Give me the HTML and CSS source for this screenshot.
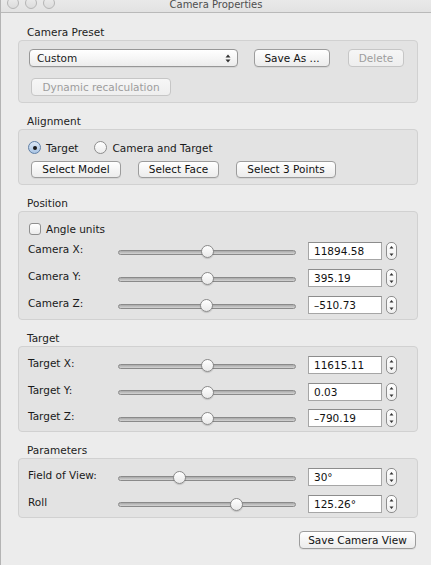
FILE: index.html
```html
<!DOCTYPE html>
<html>
<head>
<meta charset="utf-8">
<link rel="stylesheet" href="styles.css">
</head>
<body>
<div class="window">
  <div class="titlebar">
    <div class="lights"><span class="light"></span><span class="light"></span><span class="light"></span></div>
    <div class="title">Camera Properties</div>
    <div></div>
  </div>
  <div class="content">
    <section class="group">
      <div class="group-label">Camera Preset</div>
      <div class="box box-preset">
        <div class="preset-row">
          <div class="combo"><span>Custom</span>
            <svg class="combo-arrows" width="6" height="9" viewBox="0 0 6 9"><path d="M0.5 3.5 L3 0.5 L5.5 3.5 Z M0.5 5.5 L3 8.5 L5.5 5.5 Z" fill="#333"/></svg>
          </div>
          <button class="btn save-as">Save As ...</button>
          <button class="btn delete" disabled>Delete</button>
        </div>
        <button class="btn dyn" disabled>Dynamic recalculation</button>
      </div>
    </section>

    <section class="group">
      <div class="group-label">Alignment</div>
      <div class="box box-align">
        <div class="radio-row">
          <label class="radio-item"><span class="radio checked"></span>Target</label>
          <label class="radio-item"><span class="radio"></span>Camera and Target</label>
        </div>
        <div class="select-row">
          <button class="btn sel sel-model">Select Model</button>
          <button class="btn sel sel-face">Select Face</button>
          <button class="btn sel sel-points">Select 3 Points</button>
        </div>
      </div>
    </section>

    <section class="group">
      <div class="group-label">Position</div>
      <div class="box box-fields">
        <label class="check-row"><span class="checkbox"></span>Angle units</label>
        <div class="ctrl-row">
          <span class="ctrl-label">Camera X:</span>
          <div class="slider"><div class="track"></div><div class="thumb" style="left: 50%"></div></div>
          <div class="spin"><div class="field">11894.58</div><div class="stepper"><svg width="5" height="12" viewBox="0 0 5 12"><path d="M0.5 3.5 L2.5 1 L4.5 3.5 Z M0.5 8.5 L2.5 11 L4.5 8.5 Z" fill="#333"/></svg></div></div>
        </div>
        <div class="ctrl-row">
          <span class="ctrl-label">Camera Y:</span>
          <div class="slider"><div class="track"></div><div class="thumb" style="left: 50%"></div></div>
          <div class="spin"><div class="field">395.19</div><div class="stepper"><svg width="5" height="12" viewBox="0 0 5 12"><path d="M0.5 3.5 L2.5 1 L4.5 3.5 Z M0.5 8.5 L2.5 11 L4.5 8.5 Z" fill="#333"/></svg></div></div>
        </div>
        <div class="ctrl-row">
          <span class="ctrl-label">Camera Z:</span>
          <div class="slider"><div class="track"></div><div class="thumb" style="left: 49.5%"></div></div>
          <div class="spin"><div class="field">&#8211;510.73</div><div class="stepper"><svg width="5" height="12" viewBox="0 0 5 12"><path d="M0.5 3.5 L2.5 1 L4.5 3.5 Z M0.5 8.5 L2.5 11 L4.5 8.5 Z" fill="#333"/></svg></div></div>
        </div>
      </div>
    </section>

    <section class="group">
      <div class="group-label">Target</div>
      <div class="box box-fields box-target">
        <div class="ctrl-row">
          <span class="ctrl-label">Target X:</span>
          <div class="slider"><div class="track"></div><div class="thumb" style="left: 50%"></div></div>
          <div class="spin"><div class="field">11615.11</div><div class="stepper"><svg width="5" height="12" viewBox="0 0 5 12"><path d="M0.5 3.5 L2.5 1 L4.5 3.5 Z M0.5 8.5 L2.5 11 L4.5 8.5 Z" fill="#333"/></svg></div></div>
        </div>
        <div class="ctrl-row">
          <span class="ctrl-label">Target Y:</span>
          <div class="slider"><div class="track"></div><div class="thumb" style="left: 50%"></div></div>
          <div class="spin"><div class="field">0.03</div><div class="stepper"><svg width="5" height="12" viewBox="0 0 5 12"><path d="M0.5 3.5 L2.5 1 L4.5 3.5 Z M0.5 8.5 L2.5 11 L4.5 8.5 Z" fill="#333"/></svg></div></div>
        </div>
        <div class="ctrl-row">
          <span class="ctrl-label">Target Z:</span>
          <div class="slider"><div class="track"></div><div class="thumb" style="left: 50%"></div></div>
          <div class="spin"><div class="field">&#8211;790.19</div><div class="stepper"><svg width="5" height="12" viewBox="0 0 5 12"><path d="M0.5 3.5 L2.5 1 L4.5 3.5 Z M0.5 8.5 L2.5 11 L4.5 8.5 Z" fill="#333"/></svg></div></div>
        </div>
      </div>
    </section>

    <section class="group">
      <div class="group-label">Parameters</div>
      <div class="box box-fields box-params">
        <div class="ctrl-row">
          <span class="ctrl-label">Field of View:</span>
          <div class="slider"><div class="track"></div><div class="thumb" style="left: 34%"></div></div>
          <div class="spin"><div class="field">30°</div><div class="stepper"><svg width="5" height="12" viewBox="0 0 5 12"><path d="M0.5 3.5 L2.5 1 L4.5 3.5 Z M0.5 8.5 L2.5 11 L4.5 8.5 Z" fill="#333"/></svg></div></div>
        </div>
        <div class="ctrl-row">
          <span class="ctrl-label">Roll</span>
          <div class="slider"><div class="track"></div><div class="thumb" style="left: 66.5%"></div></div>
          <div class="spin"><div class="field">125.26°</div><div class="stepper"><svg width="5" height="12" viewBox="0 0 5 12"><path d="M0.5 3.5 L2.5 1 L4.5 3.5 Z M0.5 8.5 L2.5 11 L4.5 8.5 Z" fill="#333"/></svg></div></div>
        </div>
      </div>
    </section>

    <div class="footer">
      <button class="btn save-view">Save Camera View</button>
    </div>
  </div>
</div>
</body>
</html>
```

FILE: styles.css
```css
* { box-sizing: border-box; }

html, body {
  margin: 0;
  padding: 0;
  width: 431px;
  height: 565px;
  overflow: hidden;
  background: #ececec;
  font-family: "DejaVu Sans", "Noto Sans", sans-serif;
  font-size: 10.5px;
  color: #1a1a1a;
}

.window {
  height: 565px;
  border-left: 1px solid #b4b4b4;
  background: #ececec;
}

.titlebar {
  height: 13px;
  display: grid;
  grid-template-columns: 1fr auto 1fr;
  background: linear-gradient(#e9e9e9, #e2e2e2);
  border-bottom: 1px solid #b9b9b9;
  overflow: hidden;
}

.lights {
  display: flex;
  gap: 6px;
  margin-left: 6px;
  margin-top: -3px;
}

.light {
  width: 12px;
  height: 12px;
  border-radius: 50%;
  border: 1px solid #b5b5b5;
  background: linear-gradient(#ececec, #dcdcdc);
}

.title {
  font-size: 10px;
  line-height: 12px;
  margin-top: -1px;
  color: #4e4e4e;
  white-space: nowrap;
}

.content {
  padding-top: 12px;
}

.group + .group {
  margin-top: 11px;
}

.group-label {
  height: 14px;
  line-height: 14px;
  margin: 0 0 1px 26px;
  font-size: 10.5px;
  color: #222;
}

.box {
  margin-left: 17px;
  width: 400px;
  background: #e3e3e3;
  border: 1px solid #d1d1d1;
  border-radius: 4px;
}

/* buttons */
.btn {
  font-family: inherit;
  font-size: 10.5px;
  color: #111;
  height: 18px;
  padding: 0;
  border: 1px solid #9c9c9c;
  border-radius: 4px;
  background: linear-gradient(#ffffff, #f3f3f3 60%, #ececec);
  box-shadow: 0 1px 0 rgba(0,0,0,0.06);
  line-height: 16px;
  text-align: center;
}

.btn:disabled {
  color: #9d9d9d;
  border-color: #c6c6c6;
  background: linear-gradient(#f6f6f6, #eeeeee);
  box-shadow: none;
}

/* preset box */
.box-preset {
  height: 63px;
  padding: 8px 0 0 10px;
}

.preset-row {
  display: flex;
  align-items: center;
  height: 18px;
}

.combo {
  width: 209px;
  height: 18px;
  border: 1px solid #979797;
  border-radius: 4px;
  background: linear-gradient(#ffffff, #f4f4f4 60%, #ececec);
  box-shadow: 0 1px 0 rgba(0,0,0,0.06);
  display: flex;
  align-items: center;
  justify-content: space-between;
  padding: 0 6px 0 7px;
  line-height: 16px;
}

.combo-arrows { display: block; }

.save-as {
  width: 76px;
  margin-left: 16px;
}

.delete {
  width: 56px;
  margin-left: 18px;
}

.dyn {
  display: block;
  width: 140px;
  margin: 11px 0 0 2px;
}

/* alignment */
.box-align {
  height: 56px;
  padding: 10px 0 0 9px;
}

.radio-row {
  display: flex;
  align-items: center;
  height: 15px;
}

.radio-item {
  display: flex;
  align-items: center;
  margin-right: 16px;
}

.radio {
  width: 13px;
  height: 13px;
  border-radius: 50%;
  border: 1px solid #8d8d8d;
  background: linear-gradient(#ffffff, #ececec);
  margin-right: 5px;
  display: flex;
  align-items: center;
  justify-content: center;
}

.radio.checked {
  border-color: #5f7fa6;
  background: linear-gradient(#dbe7f5, #a9c4e4);
}

.radio.checked::after {
  content: "";
  width: 4px;
  height: 4px;
  border-radius: 50%;
  background: #1b1b1b;
}

.select-row {
  display: flex;
  gap: 17px;
  margin: 6px 0 0 3px;
}

.sel { height: 17px; line-height: 15px; }
.sel-model { width: 90px; }
.sel-face { width: 81px; }
.sel-points { width: 100px; }

/* field boxes */
.box-fields {
  padding: 9px 0 5px 9px;
}

.box-target { padding-bottom: 4px; }
.box-params { padding-bottom: 4px; }

.check-row {
  display: flex;
  align-items: center;
  height: 16px;
  margin-bottom: 5px;
}

.checkbox {
  width: 12px;
  height: 12px;
  border: 1px solid #8f8f8f;
  border-radius: 3px;
  background: linear-gradient(#ffffff, #ececec);
  margin: 0 5px 0 1px;
}

.ctrl-row {
  display: grid;
  grid-template-columns: 90px 178px auto;
  align-items: center;
  height: 18px;
}

.ctrl-row + .ctrl-row {
  margin-top: 9px;
}

.box-target .ctrl-row + .ctrl-row,
.box-params .ctrl-row + .ctrl-row {
  margin-top: 8.5px;
}

.ctrl-label {
  padding-bottom: 4px;
  white-space: nowrap;
}

.slider {
  position: relative;
  height: 14px;
  display: flex;
  align-items: center;
  margin-top: 2px;
}

.track {
  width: 100%;
  height: 5px;
  border-radius: 3px;
  border: 1px solid #8a8a8a;
  background: linear-gradient(#a9a9a9, #d4d4d4);
}

.thumb {
  position: absolute;
  top: 0;
  width: 13px;
  height: 13px;
  margin-left: -6px;
  border-radius: 50%;
  border: 1px solid #8a8a8a;
  background: linear-gradient(#ffffff, #e9e9e9);
  box-shadow: 0 1px 1px rgba(0,0,0,0.15);
}

.spin {
  display: flex;
  gap: 4px;
  align-items: center;
  margin-left: 12px;
}

.field {
  width: 74px;
  height: 18px;
  background: #fff;
  border: 1px solid #a6a6a6;
  border-top-color: #8c8c8c;
  padding-left: 5px;
  line-height: 17px;
  font-size: 10.5px;
  color: #111;
}

.stepper {
  width: 11px;
  height: 18px;
  border: 1px solid #8e8e8e;
  border-radius: 5px;
  background: linear-gradient(#ffffff, #efefef);
  display: flex;
  align-items: center;
  justify-content: center;
}

.stepper svg { display: block; }

.footer {
  display: flex;
  justify-content: flex-end;
  width: 417px;
  margin-top: 13px;
}

.save-view {
  width: 117px;
  height: 18px;
  margin-right: 2px;
}
```
